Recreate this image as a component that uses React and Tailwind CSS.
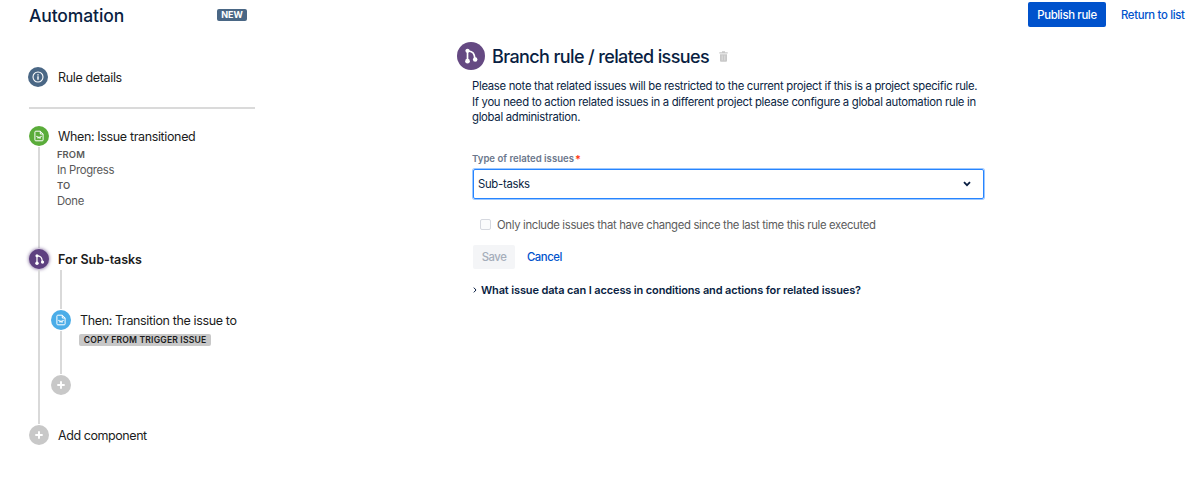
import React, { useState } from "react";

const BranchIcon = ({ className }) => (
  <svg viewBox="0 0 16 16" className={className} fill="none" stroke="white" strokeWidth="1.5">
    <path d="M4.9 3.4v9.2M4.9 3.3l3.4.9c1.5.6 2.2 1.6 2.6 3.2l.8 3.8" />
    <circle cx="4.9" cy="3.4" r="1.9" fill="white" stroke="none" />
    <circle cx="4.9" cy="12.6" r="2.1" fill="white" stroke="none" />
    <circle cx="11.7" cy="11.2" r="2" fill="white" stroke="none" />
  </svg>
);

const IssueIcon = ({ className }) => (
  <svg viewBox="0 0 12 12" className={className} fill="none" stroke="white" strokeWidth="1">
    <path d="M7.3 1.2H2.8a.9.9 0 0 0-.9.9v7.8a.9.9 0 0 0 .9.9h6.4a.9.9 0 0 0 .9-.9V4L7.3 1.2V4h2.8" />
    <path d="M3.2 6.4h1.2l.6 2 1-1.8 1 2 .6-2.2h1.2" strokeWidth="0.9" />
  </svg>
);

const InfoIcon = ({ className }) => (
  <svg viewBox="0 0 12 12" className={className} fill="none" stroke="white">
    <circle cx="6" cy="6" r="5" strokeWidth="1.1" />
    <path d="M6 5.2v3.6M6 3.2v1.2" strokeWidth="1.4" />
  </svg>
);

const PlusIcon = () => (
  <svg viewBox="0 0 8 8" className="h-2 w-2" stroke="white" strokeWidth="1.9" strokeLinecap="round">
    <path d="M4 1v6M1 4h6" />
  </svg>
);

const TrashIcon = ({ className }) => (
  <svg viewBox="0 0 9 11" className={className}>
    <path d="M3 0.3h3v1h2.7v1.2H0.3V1.3H3z" fill="#c8c8c8" />
    <path d="M1 3.2h7v6.6a1 1 0 0 1-1 1H2a1 1 0 0 1-1-1z" fill="#c8c8c8" />
    <path d="M3.2 4.5v4.8M5.8 4.5v4.8" stroke="#e4e4e4" strokeWidth="0.8" />
  </svg>
);

const Node = ({ className, children }) => (
  <div className={`flex h-5 w-5 shrink-0 items-center justify-center rounded-full ${className}`}>
    {children}
  </div>
);

const Sidebar = () => (
  <aside className="w-[226px] shrink-0 text-[#1c1c1c]">
    <div className="flex h-[31px] items-center justify-between pr-2">
      <h1 className="pt-0.5 text-[17.5px] font-medium tracking-[-0.12px] text-[#091e42]">Automation</h1>
      <span className="-mt-px flex h-3 w-[30px] items-center justify-center rounded-[2px] bg-[#4a6785] text-[9px] font-bold text-white">
        NEW
      </span>
    </div>

    <div className="mt-[36px] flex h-5 items-center gap-[10px] text-[12.5px] tracking-[-0.35px]">
      <Node className="-ml-px bg-[#4a6785]">
        <InfoIcon className="h-3 w-3" />
      </Node>
      <span className="pt-0.5">Rule details</span>
    </div>

    <hr className="mt-5 border-t-2 border-[#dadada]" />

    {/* Timeline */}
    <div className="mt-[17px]">
      <div className="flex h-[123px] gap-[9px]">
        <div className="flex flex-col items-center pb-px">
          <Node className="bg-[#5aac3a]">
            <IssueIcon className="h-3 w-3" />
          </Node>
          <div className="mt-px w-[2px] flex-1 bg-[#d9d9d9]" />
        </div>
        <div>
          <div className="flex h-[21px] items-center pt-px text-[12.5px] tracking-[-0.36px]">When: Issue transitioned</div>
          <div className="-ml-px text-[11.3px] leading-[15.6px] text-[#595959]">
            <div className="text-[9.4px] font-semibold tracking-[0.1px]">FROM</div>
            <div className="tracking-[-0.3px]">In Progress</div>
            <div className="text-[9.4px] font-semibold tracking-[0.1px]">TO</div>
            <div className="tracking-[-0.3px]">Done</div>
          </div>
        </div>
      </div>

      <div className="flex h-[176px]">
        <div className="flex flex-col items-center pb-px">
          <Node className="bg-[#5e4080] shadow-[0_0_3px_1px_rgba(94,64,128,0.5)]">
            <BranchIcon className="h-[13px] w-[13px]" />
          </Node>
          <div className="mt-px w-[2px] flex-1 bg-[#d9d9d9]" />
        </div>
        <div className="ml-0.5">
          <div className="ml-[7px] flex h-5 items-center pt-[3px] text-[12.5px] font-semibold tracking-[-0.05px]">
            For Sub-tasks
          </div>
          <div className="flex h-[41px] w-5 justify-center">
            <div className="my-px w-[2px] bg-[#d9d9d9]" />
          </div>
          <div className="flex h-[65px] gap-2">
            <div className="flex flex-col items-center pb-px">
              <Node className="bg-[#4bade8]">
                <IssueIcon className="h-3 w-3" />
              </Node>
              <div className="mt-px w-[2px] flex-1 bg-[#d9d9d9]" />
            </div>
            <div>
              <div className="mb-0.5 ml-px flex h-[22px] items-center text-[12.5px] tracking-[-0.36px]">
                Then: Transition the issue to
              </div>
              <div className="flex h-3 w-[132px] items-center justify-center rounded-[2px] bg-[#c8c8c8] text-[8.6px] font-semibold tracking-[0.17px]">
                COPY FROM TRIGGER ISSUE
              </div>
            </div>
          </div>
          <Node className="bg-[#c8c8c8]">
            <PlusIcon />
          </Node>
        </div>
      </div>

      <div className="flex h-5 items-center gap-[9px] text-[12.5px] tracking-[-0.43px]">
        <Node className="bg-[#c8c8c8]">
          <PlusIcon />
        </Node>
        <span className="pt-0.5">Add component</span>
      </div>
    </div>
  </aside>
);

const BranchForm = () => {
  const [changedOnly, setChangedOnly] = useState(false);

  return (
    <main className="mt-[42px] ml-[202px] w-[530px] shrink-0">
      <div className="flex h-7 items-center">
        <div className="flex h-7 w-7 items-center justify-center rounded-full bg-[#654982]">
          <BranchIcon className="h-[18px] w-[18px]" />
        </div>
        <h2 className="ml-[7px] w-[218px] text-[18px] font-medium tracking-[-0.62px] whitespace-nowrap">
          Branch rule / related issues
        </h2>
        <TrashIcon className="ml-[9px] h-[11px] w-[9px]" />
      </div>

      <div className="ml-4">
        <p className="-ml-px mt-[9px] text-[11.3px] leading-[15.6px] tracking-[-0.285px] whitespace-nowrap">
          Please note that related issues will be restricted to the current project if this is a project specific rule.
          <br />
          If you need to action related issues in a different project please configure a global automation rule in
          <br />
          global administration.
        </p>

        <label className="mt-[25px] -ml-px flex h-4 items-center text-[9.6px] font-semibold text-[#6b778c]">
          Type of related issues<span className="ml-px text-[11px] text-[#ff3b12]">*</span>
        </label>
        <button className="mt-[2px] flex h-[30px] w-[511px] items-center justify-between rounded-[2px] border border-[#2684ff] pr-3 pl-1 text-[11.3px] tracking-[-0.28px] shadow-[0_0_0_1px_rgba(38,132,255,0.45)]">
          <span className="pt-0.5">Sub-tasks</span>
          <svg viewBox="0 0 8 6" className="h-1.5 w-2" fill="none" stroke="#091e42" strokeWidth="1.8">
            <path d="M1 1.2l3 3 3-3" />
          </svg>
        </button>

        <label className="mt-[18px] ml-[7px] flex h-4 items-center gap-[6px] text-[11.3px] tracking-[-0.325px] text-[#5c5c5c]">
          <input
            type="checkbox"
            checked={changedOnly}
            onChange={(e) => setChangedOnly(e.target.checked)}
            className="h-[11px] w-[11px] appearance-none rounded-[2px] border-[1.5px] border-[#d5d8df] bg-[#fafbfc]"
          />
          <span className="pt-0.5">Only include issues that have changed since the last time this rule executed</span>
        </label>

        <div className="mt-3 flex h-6 items-center gap-3 text-[11.3px] font-medium tracking-[-0.43px]">
          <button className="h-6 w-[42px] rounded-[2px] bg-[#f4f5f7] pt-0.5 text-[#a5adba]">Save</button>
          <button className="pt-0.5 text-[#0052cc]">Cancel</button>
        </div>

        <div className="mt-[13px] flex h-4 items-center text-[11px] font-semibold tracking-[-0.135px] whitespace-nowrap">
          <svg viewBox="0 0 4 6" className="mr-1 h-1.5 w-1" fill="none" stroke="#091e42">
            <path d="M0.8 0.6L3 3 0.8 5.4" />
          </svg>
          What issue data can I access in conditions and actions for related issues?
        </div>
      </div>
    </main>
  );
};

const App = () => (
  <div className="flex h-[499px] w-[1200px] overflow-hidden bg-white pl-[29px] font-['Inter',sans-serif] text-[#091e42]">
    <Sidebar />
    <BranchForm />
    <div className="mt-[2px] ml-[41px] flex h-[25px] items-center gap-4 text-[11.3px] font-medium tracking-[-0.32px] whitespace-nowrap">
      <button className="h-[25px] w-[78px] rounded-[2px] bg-[#0052cc] pt-px text-white">Publish rule</button>
      <a href="#" className="-ml-px pt-px text-[#0052cc]">
        Return to list
      </a>
    </div>
  </div>
);

export default App;
